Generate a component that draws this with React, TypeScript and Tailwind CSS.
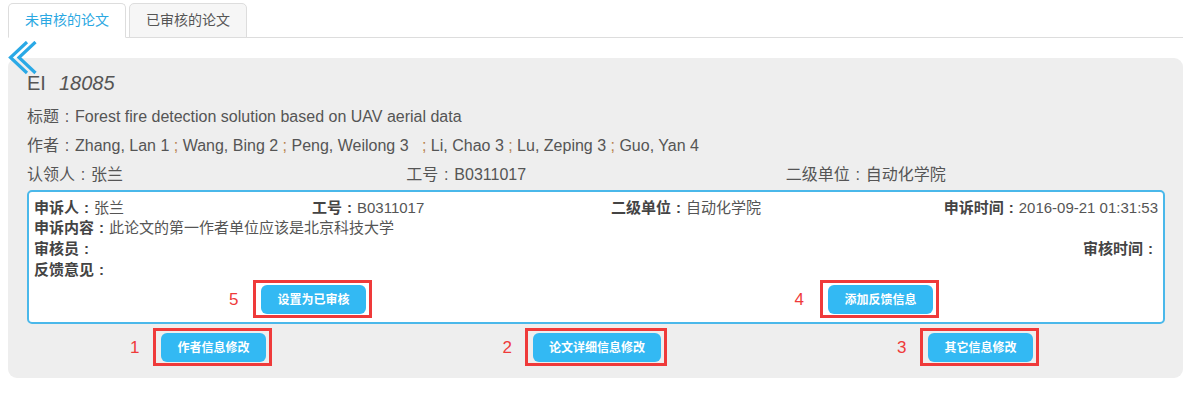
import React from "react";

const FONT = { fontFamily: '"Liberation Sans", Arial, "Noto Sans CJK SC", sans-serif' };

const C = () => <span className="inline-block w-[1em] text-center">:</span>;

function Btn({ label }: { label: string }) {
  return (
    <div className="border-[3px] border-[#ef3a3a] pl-[5px] pr-[3px] pt-[2px] pb-[1px]">
      <div className="h-[29px] px-[16px] rounded-[6px] bg-[#33b9f3] text-white text-[12px] font-bold flex items-center justify-center whitespace-nowrap">
        {label}
      </div>
    </div>
  );
}

function Annotated({ n, label, gap = 14 }: { n: string; label: string; gap?: number }) {
  return (
    <div className="flex items-center justify-center">
      <span
        className="w-[26px] text-right text-[17px] text-[#ef3a3a] leading-none"
        style={{ paddingRight: gap }}
      >
        {n}
      </span>
      <Btn label={label} />
      <span className="w-[26px]" />
    </div>
  );
}

const Semi = () => <span className="text-[#b98550]">;</span>;

export default function App() {
  return (
    <div className="w-[1191px] h-[403px] bg-white overflow-hidden" style={FONT}>
      {/* tabs */}
      <div className="mx-2 h-[38px] flex items-end gap-[3px] border-b border-[#dddddd]">
        <div className="-mb-px h-[35px] px-4 flex items-center rounded-t-[5px] border border-[#dddddd] border-b-white bg-white text-[14px] text-[#2ba8e2]">
          未审核的论文
        </div>
        <div className="-mb-px h-[35px] px-4 flex items-center rounded-t-[5px] border border-[#dddddd] bg-[#f6f6f6] text-[14px] text-[#555]">
          已审核的论文
        </div>
      </div>

      {/* panel */}
      <div className="relative mx-2 mt-[20px] rounded-[9px] bg-[#eeeeee] pl-[19px] pr-[18px] pt-[10px] pb-[12px] text-[#555]">
        <svg
          className="absolute left-0 top-[-17px]"
          width="30"
          height="34"
          viewBox="0 0 30 34"
          fill="none"
          stroke="#2aa9e6"
          strokeWidth="3.2"
          strokeLinecap="butt"
          strokeLinejoin="miter"
        >
          <polyline points="19,1 2.5,16.5 19,32" />
          <polyline points="27.5,1 11,16.5 27.5,32" />
        </svg>

        <div className="h-[30px] flex items-center text-[20px] leading-none">
          <span>EI</span>
          <span className="ml-[13px] italic">18085</span>
        </div>

        <div className="mt-[4px] h-[29px] flex items-center text-[16px] whitespace-nowrap">
          标题<C />Forest fire detection solution based on UAV aerial data
        </div>
        <div className="h-[29px] flex items-center text-[16px] whitespace-pre">
          作者<C />Zhang, Lan 1 <Semi /> Wang, Bing 2 <Semi /> Peng, Weilong 3{"   "}<Semi /> Li, Chao 3 <Semi /> Lu, Zeping 3 <Semi /> Guo, Yan 4
        </div>
        <div className="h-[29px] grid grid-cols-3 items-center text-[16px]">
          <div>认领人<C />张兰</div>
          <div>工号<C />B0311017</div>
          <div>二级单位<C />自动化学院</div>
        </div>

        {/* inner box */}
        <div className="mt-[1px] rounded-[5px] border-2 border-[#4ab8ea] bg-white pt-[5px] pb-[4px] text-[15px] text-[#555]">
          <div className="px-[5px] h-[21px] grid grid-cols-[278px_299px_1fr_auto] items-center whitespace-nowrap">
            <div><b className="text-[#444]">申诉人<C /></b>张兰</div>
            <div><b className="text-[#444]">工号<C /></b>B0311017</div>
            <div><b className="text-[#444]">二级单位<C /></b>自动化学院</div>
            <div><b className="text-[#444]">申诉时间<C /></b>2016-09-21 01:31:53</div>
          </div>
          <div className="px-[5px] h-[21px] flex items-center">
            <b className="text-[#444]">申诉内容<C /></b>此论文的第一作者单位应该是北京科技大学
          </div>
          <div className="px-[5px] h-[21px] flex items-center justify-between">
            <b className="text-[#444]">审核员<C /></b>
            <b className="text-[#444]">审核时间<C /></b>
          </div>
          <div className="px-[5px] h-[21px] flex items-center">
            <b className="text-[#444]">反馈意见<C /></b>
          </div>
          <div className="-mt-[1px] grid grid-cols-2">
            <Annotated n="5" label="设置为已审核" gap={15} />
            <Annotated n="4" label="添加反馈信息" gap={17} />
          </div>
        </div>

        {/* outer buttons */}
        <div className="mt-[4px] grid grid-cols-[371px_396px_1fr]">
          <Annotated n="1" label="作者信息修改" />
          <Annotated n="2" label="论文详细信息修改" gap={13} />
          <Annotated n="3" label="其它信息修改" />
        </div>
      </div>
    </div>
  );
}
